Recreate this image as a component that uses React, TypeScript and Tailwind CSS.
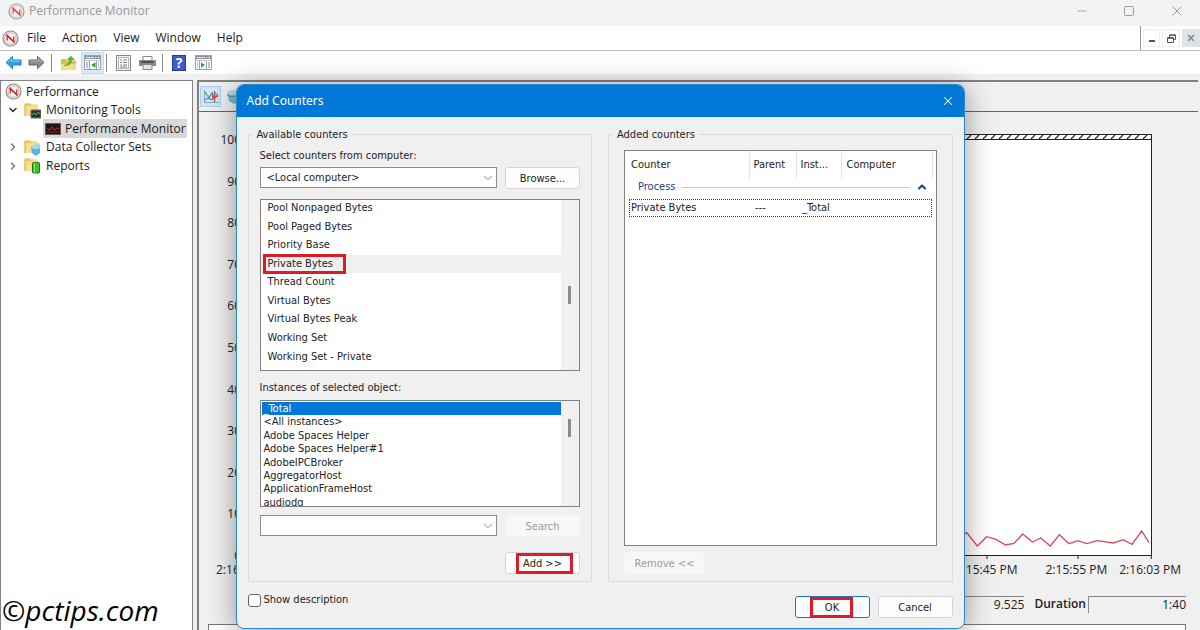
import type { ReactNode } from 'react'
import { ChevronDown, ChevronRight, ChevronUp, Minus, Square, X } from 'lucide-react'
import clsx from 'clsx'

const menuItems = ['File', 'Action', 'View', 'Window', 'Help']

const counters = [
  'Pool Nonpaged Bytes',
  'Pool Paged Bytes',
  'Priority Base',
  'Private Bytes',
  'Thread Count',
  'Virtual Bytes',
  'Virtual Bytes Peak',
  'Working Set',
  'Working Set - Private',
]

const instances = [
  '_Total',
  '<All instances>',
  'Adobe Spaces Helper',
  'Adobe Spaces Helper#1',
  'AdobeIPCBroker',
  'AggregatorHost',
  'ApplicationFrameHost',
  'audiodg',
]

const yLabels = [100, 90, 80, 70, 60, 50, 40, 30, 20, 10, 0]

function PerfIcon({ className }: { className?: string }) {
  return (
    <svg viewBox="0 0 17 17" className={clsx('size-[17px] shrink-0', className)} fill="none" aria-hidden="true">
      <circle cx="8.5" cy="8.5" r="7.5" fill="#fbf6f5" stroke="#8d8a89" strokeWidth="1.2" />
      <circle cx="8.5" cy="8.5" r="5.7" stroke="#c9a5a3" strokeWidth="0.9" />
      <path d="M5.2 10.5V6l6.6 5.5V6.5" stroke="#cf2b30" strokeWidth="1.3" />
      <path d="M4.5 4.5l8 8" stroke="#cf2b30" strokeWidth="1.3" />
    </svg>
  )
}

function FolderIcon({ children }: { children?: ReactNode }) {
  return (
    <svg viewBox="0 0 17 17" className="size-[17px] shrink-0" aria-hidden="true">
      <path d="M0 2.5l1-1.3h5l1 1.3h6V14H0z" fill="#e9c765" />
      <path d="M0 4.2h7l1-1h6V14H0z" fill="#f6df95" />
      <path d="M0 4.2h2.5V14H0z" fill="#edcb70" />
      {children}
    </svg>
  )
}

function ArrowIcon({ flip }: { flip?: boolean }) {
  return (
    <svg viewBox="0 0 17 15" className={clsx('h-[15px] w-[17px]', flip && '-scale-x-100')} aria-hidden="true">
      <path
        d="M1 7.5L7.5 1.3V5H16v5H7.5v3.7z"
        fill={flip ? '#8b8b8b' : '#2fa0dc'}
        stroke={flip ? '#686868' : '#1f86c4'}
      />
      <path d="M3 7.3l3.7-3.5v2.4H15" fill="none" stroke={flip ? '#b5b5b5' : '#7fd0f5'} />
    </svg>
  )
}

function PaneIcon({ flip }: { flip?: boolean }) {
  return (
    <svg viewBox="0 0 17 15" className="h-[15px] w-[17px]" aria-hidden="true">
      <rect x="0.5" y="0.5" width="16" height="14" fill="#fff" stroke="#9aa1a9" />
      <path d="M1 1h15v3H1z" fill="#8a939d" />
      <path d="M2 2.5h8M11 2.5h1M13 2.5h2" stroke="#e6ebf0" />
      <path d="M1 5.5h15" stroke="#c3c9cf" />
      <path d={flip ? 'M4.5 6v8M11.5 6v8' : 'M5.5 6v8M12.5 6v8'} stroke="#9aa1a9" />
      <path d={flip ? 'M2 8h1M2 10h1M2 12h1M13 8h2M13 10h2M13 12h2' : 'M2 8h2M2 10h2M2 12h2M14 8h1M14 10h1M14 12h1'} stroke="#7d8894" />
      <path d={flip ? 'M6 7.3v5.4L10 10z' : 'M11.5 7.3v5.4L7 10z'} fill="#35a02f" />
    </svg>
  )
}

function Toolbar() {
  return (
    <div className="flex h-[23px] shrink-0 items-center bg-white pl-[5px] text-[#888]">
      <button aria-label="Back"><ArrowIcon /></button>
      <button aria-label="Forward" className="ml-1.5"><ArrowIcon flip /></button>
      <span className="ml-1.5 h-[18px] w-px bg-[#8a8a8a]" />
      <button aria-label="Up one level" className="ml-[9px]">
        <svg viewBox="0 0 16 16" className="size-4" aria-hidden="true">
          <path d="M0 4h5l1 1.5h9V15H0z" fill="#e6bd51" />
          <path d="M0 9h15v6H0z" fill="#f5dc8c" />
          <path d="M3 10c4-.5 5-3 5-5H5.5L10 .8 14 5h-3c0 4-3 6-8 6z" fill="#5db53b" />
        </svg>
      </button>
      <button
        aria-label="Show or hide console tree"
        className="ml-1 flex h-[22px] w-[23px] items-center justify-center border border-[#bcdcf4] bg-[#d5eafa]"
      >
        <PaneIcon />
      </button>
      <span className="ml-0.5 h-[18px] w-px bg-[#8a8a8a]" />
      <button aria-label="Properties" className="ml-[9px]">
        <svg viewBox="0 0 15 16" className="h-4 w-[15px]" fill="none" aria-hidden="true">
          <rect x="0.5" y="0.5" width="14" height="15" fill="#f4f4f4" stroke="#8a8a8a" />
          <rect x="2.5" y="2.5" width="10" height="11" fill="#fff" stroke="#b5b5b5" />
          <path d="M4 5h2M7 5h4M4 7.5h2M7 7.5h4M4 10h2M7 10h4M4 12h7" stroke="#6f7b86" />
        </svg>
      </button>
      <button aria-label="Print" className="ml-2">
        <svg viewBox="0 0 17 14" className="h-3.5 w-[17px]" aria-hidden="true">
          <path d="M4 .5h9V5H4z" fill="#fff" stroke="#888" />
          <path d="M0 4h17v6H0z" fill="#85898d" />
          <path d="M2 6h13" stroke="#3d4145" strokeWidth="1.5" />
          <path d="M4 8.5h9v5H4z" fill="#dfe8f2" stroke="#888" />
          <path d="M14 5h2" stroke="#7ed957" />
        </svg>
      </button>
      <span className="ml-1.5 h-[18px] w-px bg-[#8a8a8a]" />
      <button
        aria-label="Help"
        className="ml-[9px] flex h-4 w-[14px] items-center justify-center border border-[#27388f] bg-[#3f5bd0] text-sm leading-4 font-bold text-white"
      >
        ?
      </button>
      <button aria-label="Show action pane" className="ml-[9px]"><PaneIcon flip /></button>
    </div>
  )
}

function Tree() {
  return (
    <nav className="w-[193px] shrink-0 border border-b-0 border-[#828282] bg-white pt-px pr-[5px]">
      <ul className="text-xs leading-[18px] text-[#1b1b1b]">
        <li className="flex h-[19px] items-center gap-1 pl-1"><PerfIcon /> Performance</li>
        <li className="flex h-[18px] items-center pl-1.5">
          <ChevronDown className="size-3 text-[#333]" strokeWidth={3} />
          <span className="mr-[5px] ml-[5px] flex">
            <FolderIcon>
              <path d="M7 8h10v8H7z" fill="#2d352d" stroke="#6c716c" />
              <path d="M8 13l2-2 2 2 2-3 2 2" fill="none" stroke="#58b947" />
            </FolderIcon>
          </span>
          Monitoring Tools
        </li>
        <li className="ml-[42px] flex h-[19px] items-center gap-1 bg-[#d9d9d9] pl-0.5">
          <svg viewBox="0 0 16 12" className="h-3 w-4 shrink-0" aria-hidden="true">
            <path d="M.5.5h15v11H.5z" fill="#241414" stroke="#6b5555" />
            <path d="M2 5l2 2 3-3 2 3 3-2 2 1" fill="none" stroke="#b8343c" />
            <path d="M2 9h12" stroke="#6d2a2e" />
          </svg>
          <span className="whitespace-nowrap">Performance Monitor</span>
        </li>
        <li className="flex h-[18px] items-center pl-1.5">
          <ChevronRight className="size-3 text-[#777]" strokeWidth={3} />
          <span className="mr-[5px] ml-[5px] flex">
            <FolderIcon>
              <path d="M9 6l5-2 2 1v7l-4 2z" fill="#b4d5ec" />
              <path d="M7 8l5-1 4 1v6l-4 3-4-3z" fill="#5fb0de" />
              <ellipse cx="12" cy="8.5" rx="4" ry="1.6" fill="#a9dcf4" />
            </FolderIcon>
          </span>
          Data Collector Sets
        </li>
        <li className="flex h-[19px] items-center pl-1.5">
          <ChevronRight className="size-3 text-[#777]" strokeWidth={3} />
          <span className="mr-[5px] ml-[5px] flex">
            <FolderIcon>
              <rect x="8.5" y="5.5" width="7" height="10.5" rx="1" fill="#3fc02c" stroke="#1e7d16" />
              <path d="M10.5 6v10" stroke="#8be87a" />
            </FolderIcon>
          </span>
          Reports
        </li>
      </ul>
    </nav>
  )
}

function Graph() {
  return (
    <section className="mr-0.5 flex min-w-0 flex-1 flex-col border-t-2 border-l-2 border-[#808080] bg-[#f0f0f0] text-xs text-[#222]">
      <div className="flex h-[30px] shrink-0 items-center border-b border-[#666] pl-px">
        <span className="flex size-[21px] items-center justify-center border border-[#a9cfee] bg-[#cfe6f8]">
          <svg viewBox="0 0 16 14" className="h-3.5 w-4" fill="none" aria-hidden="true">
            <path d="M1.5 0v12.5H16" stroke="#8fa3b3" />
            <path d="M2 2l4 6 3-5 2 6 4-4" stroke="#3f9b5a" strokeWidth="1.2" />
            <path d="M2 10l3-2 4 2 3-7 3 2" stroke="#2f6fc0" />
            <path d="M11.5 1v11M9 6.5h6" stroke="#d24a3c" strokeWidth="1.3" />
            <path d="M3 5.5h3" stroke="#e0a92e" />
          </svg>
        </span>
        <svg viewBox="0 0 16 16" className="ml-[5px] size-4" aria-hidden="true">
          <path d="M1 3h14v9l-7 3-5-3z" fill="#7fb9cb" />
          <ellipse cx="8" cy="3.5" rx="7" ry="2.5" fill="#b5dbe6" />
          <path d="M1 6c3 2 6 2 8 1" fill="none" stroke="#4c8ea6" />
        </svg>
      </div>

      <div className="flex flex-1 pt-[22px]">
        <div className="-mt-0.5 -mb-2 flex w-[46px] flex-col justify-between pr-1 text-right leading-4">
          {yLabels.map((n) => (
            <span key={n}>{n}</span>
          ))}
        </div>
        <div className="relative mr-[46px] flex-1 border border-[#222] bg-white">
          <svg className="h-[5px] w-full border-b border-[#222]" aria-hidden="true">
            <defs>
              <pattern id="hatch" width="8" height="4" patternUnits="userSpaceOnUse">
                <path d="M1 4l4-4" stroke="#222" strokeWidth="1.2" />
              </pattern>
            </defs>
            <rect width="100%" height="4" fill="url(#hatch)" />
          </svg>
          <svg viewBox="0 0 576 156" className="absolute -right-px -bottom-[7px] h-[52px] w-48" fill="none" aria-hidden="true">
            <path
              d="M0 80L20 68 52 108 80 80 108 88 137 105 162 100 188 72 217 96 242 84 271 108 298 74 327 101 354 92 380 101 412 92 460 99 490 89 516 103 545 63 567 98"
              stroke="#d94b58"
              strokeWidth="4"
            />
            <path d="M81 135v12M354 135v12M574 135v12" stroke="#222" strokeWidth="3" />
          </svg>
        </div>
      </div>

      <div className="mt-1.5 flex pr-[17px] pl-[17px] leading-4 whitespace-nowrap">
        <span>2:16</span>
        <span className="mr-7 ml-auto">2:15:45 PM</span>
        <span className="mr-3">2:15:55 PM</span>
        <span>2:16:03 PM</span>
      </div>

      <div className="mt-[18px] flex justify-end gap-2.5 pr-3 leading-4">
        <span className="w-24 border-t border-[#888] text-right">9.525</span>
        <div className="flex gap-0.5">
          <b className="font-semibold">Duration</b>
          <span className="w-[98px] border-t border-l border-[#888] text-right">1:40</span>
        </div>
      </div>
      <div className="mt-[11px] mr-3 ml-[9px] h-1.5 border border-b-0 border-[#777] bg-white" />
    </section>
  )
}

/* Red outline drawn over the control it points at */
function Highlight({ className }: { className: string }) {
  return <span className={clsx('pointer-events-none absolute border-[3px] border-[#dc1c28]', className)} />
}

function Button({ children, disabled, className }: { children: ReactNode; disabled?: boolean; className?: string }) {
  return (
    <button
      disabled={disabled}
      className={clsx(
        'relative h-[22px] rounded-[3px] border pt-0.5 leading-4 whitespace-nowrap',
        disabled ? 'border-[#f4f4f4] bg-[#f7f7f7] text-[#9b9b9b]' : 'bg-[#fdfdfd]',
        className ?? 'w-[75px] border-[#d5d5d5]',
      )}
    >
      {children}
    </button>
  )
}

function Combo({ id, label, value }: { id: string; label?: string; value: string }) {
  return (
    <div className="relative flex-1">
      <select
        id={id}
        aria-label={label}
        defaultValue={value}
        className="block h-[21px] w-full appearance-none border border-[#8b8b8b] bg-white pl-1.5 leading-4"
      >
        <option>{value}</option>
      </select>
      <ChevronDown className="pointer-events-none absolute top-1 right-0.5 size-3.5 text-[#777]" strokeWidth={1.5} />
    </div>
  )
}

function AvailableCounters() {
  return (
    <fieldset className="h-[457px] min-w-0 border border-[#dcdcdc]">
      <legend className="ml-1 px-1 pt-0.5 leading-4">Available counters</legend>
      <div className="flex flex-col px-[11px] pt-[5px]">
        <label htmlFor="computer" className="leading-4">Select counters from computer:</label>
        <div className="mt-[3px] flex gap-2">
          <Combo id="computer" value="<Local computer>" />
          <Button>Browse...</Button>
        </div>

        <div className="relative mt-2.5">
          <div className="flex h-[172px] overflow-hidden border border-[#828282] bg-white">
            <ul role="listbox" aria-label="Counters" className="-mt-px flex h-[167px] flex-1 flex-col">
              {counters.map((name) => (
                <li
                  key={name}
                  role="option"
                  aria-selected={name === 'Private Bytes'}
                  className={clsx('flex-1 pl-[7px] leading-[18px]', name === 'Private Bytes' && 'bg-[#f0f0f0]')}
                >
                  {name}
                </li>
              ))}
            </ul>
            <div className="w-[18px] bg-[#f0f0f0] pt-[86px] pl-[7px]">
              <div className="h-[18px] w-[3px] bg-[#8b8b8b]" />
            </div>
          </div>
          <Highlight className="top-[55px] left-[3px] h-5 w-[83px]" />
        </div>

        <span className="mt-[9px] leading-4">Instances of selected object:</span>
        <div className="mt-1 flex h-[107px] overflow-hidden border border-[#828282] bg-white">
          <ul role="listbox" aria-label="Instances" className="mt-px flex h-[107px] flex-1 flex-col pl-px">
            {instances.map((name) => (
              <li
                key={name}
                role="option"
                aria-selected={name === '_Total'}
                className={clsx('flex-1 pl-0.5 leading-[13px]', name === '_Total' && 'bg-[#0078d7] text-white')}
              >
                {name}
              </li>
            ))}
          </ul>
          <div className="w-[18px] bg-[#f0f0f0] pt-[18px] pl-[7px]">
            <div className="h-[18px] w-[3px] bg-[#8b8b8b]" />
          </div>
        </div>

        <div className="mt-2 flex gap-2">
          <Combo id="instance-search" label="Search instances" value="" />
          <Button disabled>Search</Button>
        </div>
        <div className="mt-[15px] flex justify-end">
          <Button>
            Add &gt;&gt;
            <Highlight className="top-0 left-2.5 h-[21px] w-[57px]" />
          </Button>
        </div>
      </div>
    </fieldset>
  )
}

function AddedCounters() {
  return (
    <fieldset className="h-[457px] min-w-0 border border-[#dcdcdc]">
      <legend className="ml-1 px-1 pt-0.5 leading-4">Added counters</legend>
      <div className="px-[15px] pt-[7px]">
        <div className="h-[396px] border border-[#828282] bg-white pr-[3px] pl-1">
          <table className="w-full table-fixed border-collapse text-left leading-4">
            <colgroup>
              <col className="w-[120px]" />
              <col className="w-[47px]" />
              <col className="w-[45px]" />
              <col />
            </colgroup>
            <thead>
              <tr className="h-7">
                <th className="border-r border-[#e5e5e5] pl-0.5 font-normal">Counter</th>
                <th className="border-r border-[#e5e5e5] pl-1 font-normal">Parent</th>
                <th className="border-r border-[#e5e5e5] pl-1 font-normal">Inst...</th>
                <th className="border-r border-[#e5e5e5] pl-[5px] font-normal">Computer</th>
              </tr>
            </thead>
            <tbody>
              <tr className="h-5">
                <td colSpan={4} className="pr-1 pl-[9px] text-[#1e3c87]">
                  <div className="flex items-center gap-1.5 pb-1">
                    Process
                    <span className="h-px flex-1 bg-[#ccc]" />
                    <ChevronUp className="size-3" strokeWidth={4} />
                  </div>
                </td>
              </tr>
              <tr className="h-[18px] outline outline-1 -outline-offset-1 outline-[#444] outline-dotted">
                <td className="pl-0.5">Private Bytes</td>
                <td className="pl-1.5">---</td>
                <td className="pl-1.5">_Total</td>
                <td />
              </tr>
            </tbody>
          </table>
        </div>
        <div className="mt-1.5">
          <Button disabled className="w-[81px] border-[#f4f4f4]">Remove &lt;&lt;</Button>
        </div>
      </div>
    </fieldset>
  )
}

function AddCountersDialog() {
  return (
    <div
      role="dialog"
      aria-label="Add Counters"
      className="absolute inset-x-0 top-[84px] mx-auto flex w-[729px] flex-col overflow-hidden rounded-lg border border-[#2b87c8] bg-[#f0f0f0] font-['DejaVu_Sans_Condensed','DejaVu_Sans',sans-serif] text-[11px] text-[#222] shadow-[0_4px_28px_rgba(0,0,0,0.4)]"
    >
      <header className="flex h-8 items-center justify-between bg-[#0078d7] pr-[9px] pl-2.5 font-['Noto_Sans',sans-serif] text-xs text-white">
        Add Counters
        <button aria-label="Close dialog"><X className="size-3.5" strokeWidth={1.75} /></button>
      </header>
      <div className="grid grid-cols-2 gap-4 px-[11px] pt-2">
        <AvailableCounters />
        <AddedCounters />
      </div>
      <footer className="flex h-[46px] items-start gap-2 px-[11px] pt-2.5">
        <label className="mr-auto flex items-center gap-[3px] leading-4">
          <input type="checkbox" className="size-[13px] appearance-none rounded-[3px] border border-[#666] bg-white" />
          Show description
        </label>
        <div className="flex gap-2 pt-1">
          <Button className="w-[75px] border-[#2574b0]">
            OK
            <Highlight className="top-0 left-3.5 h-[21px] w-[43px]" />
          </Button>
          <Button>Cancel</Button>
        </div>
      </footer>
    </div>
  )
}

export default function App() {
  return (
    <div className="relative flex h-screen flex-col overflow-hidden bg-[#f0f0f0] font-['Open_Sans','Noto_Sans',sans-serif]">
      <header className="flex h-[26px] shrink-0 items-center bg-[#f3f3f3] pr-[15px] pb-1 pl-2 text-xs text-[#999]">
        <PerfIcon className="mr-1 opacity-80" />
        Performance Monitor
        <div className="ml-auto flex items-center gap-[34px]">
          <button aria-label="Minimize"><Minus className="size-3.5" strokeWidth={1.5} /></button>
          <button aria-label="Maximize"><Square className="size-3" strokeWidth={2} /></button>
          <button aria-label="Close"><X className="size-4" strokeWidth={1.5} /></button>
        </div>
      </header>

      <div className="flex h-[25px] shrink-0 items-center border-b border-[#bdbdbd] bg-white pl-0.5 text-xs text-[#1b1b1b]">
        <PerfIcon />
        <nav className="ml-2 flex gap-4">
          {menuItems.map((item) => (
            <button key={item}>{item}</button>
          ))}
        </nav>
        <div className="ml-auto flex h-full items-center gap-0.5 border-l border-[#999] pl-0.5 text-[#555]">
          <button aria-label="Minimize child window" className="flex h-[18px] w-[17px] items-end justify-center border border-[#eee] pb-1">
            <span className="h-0.5 w-1.5 bg-[#555]" />
          </button>
          <button aria-label="Restore child window" className="flex h-[18px] w-[18px] items-center justify-center border border-[#eee]">
            <svg viewBox="0 0 9 9" className="size-[9px]" fill="none" stroke="currentColor" aria-hidden="true">
              <path d="M2.5 3V.8h6v4.7H6.5M2.5 1.3h6M.5 3.5h6v5h-6zM.5 4.3h6" />
            </svg>
          </button>
          <button aria-label="Close child window" className="flex h-[18px] w-[18px] items-center justify-center bg-[#dfe3e8] text-[#888]">
            <X className="size-2.5" strokeWidth={4} />
          </button>
        </div>
      </div>

      <Toolbar />

      <main className="mt-1.5 flex min-h-0 flex-1 gap-1">
        <Tree />
        <Graph />
      </main>

      <AddCountersDialog />

      <p className="absolute bottom-0 left-0.5 font-['Open_Sans',sans-serif] text-[28px] leading-10 text-black italic">
        ©pctips.com
      </p>
    </div>
  )
}
